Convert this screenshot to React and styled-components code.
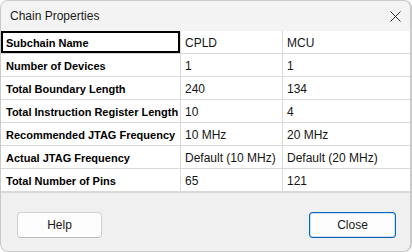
import React from 'react';
import styled, { createGlobalStyle } from 'styled-components';

const GlobalStyle = createGlobalStyle`
  html, body {
    margin: 0;
    padding: 0;
    background: #ffffff;
  }
`;

const Window = styled.div`
  box-sizing: border-box;
  width: 412px;
  height: 252px;
  border: 1px solid #c9c9c9;
  border-right-width: 2px;
  border-radius: 8px;
  background-color: #f0f0f0;
  overflow: hidden;
  display: flex;
  flex-direction: column;
  font-family: 'Liberation Sans', Arial, sans-serif;
  color: #1a1a1a;
`;

const TitleBar = styled.div`
  height: 30px;
  display: flex;
  align-items: center;
  justify-content: space-between;
  padding: 0 9px 0 9px;
  background-color: #f3f3f3;
  font-size: 12px;
`;

const CloseGlyph = styled.svg`
  width: 11px;
  height: 11px;
  margin-top: 1px;
`;

const Table = styled.div`
  display: grid;
  grid-template-columns: 180px 102px 1fr;
  background-color: #ffffff;
  border-bottom: 1px solid #d9d9d9;
`;

const Cell = styled.div`
  box-sizing: border-box;
  height: 23px;
  display: flex;
  align-items: center;
  padding-left: ${(p) => (p.$label ? '5px' : '4px')};
  padding-top: 1px;
  border-right: 1px solid #d9d9d9;
  border-bottom: 1px solid #d9d9d9;
  font-size: ${(p) => (p.$label ? '11px' : '12px')};
  font-weight: ${(p) => (p.$label ? 700 : 400)};
  color: ${(p) => (p.$label ? '#000000' : '#151515')};
  white-space: nowrap;
  box-shadow: ${(p) => (p.$focused ? 'inset 0 0 0 2px #000000' : 'none')};

  &:nth-child(3n) {
    border-right: none;
  }
`;

const Footer = styled.div`
  flex: 1;
  display: flex;
  justify-content: space-between;
  align-items: flex-start;
  padding: 19px 14px 0 16px;
`;

const Button = styled.button`
  box-sizing: border-box;
  width: ${(p) => (p.$primary ? '87px' : '85px')};
  height: 26px;
  border-radius: 4px;
  border: 1px solid ${(p) => (p.$primary ? '#0067c0' : '#d0d0d0')};
  border-bottom-color: ${(p) => (p.$primary ? '#0060b0' : '#bcbcbc')};
  box-shadow: ${(p) => (p.$primary ? 'inset 0 0 0 1px #cfe0f3' : 'none')};
  background-color: #fdfdfd;
  font-family: 'Liberation Sans', Arial, sans-serif;
  font-size: 12px;
  color: #1a1a1a;
  padding: 0;
`;

const rows = [
  ['Subchain Name', 'CPLD', 'MCU'],
  ['Number of Devices', '1', '1'],
  ['Total Boundary Length', '240', '134'],
  ['Total Instruction Register Length', '10', '4'],
  ['Recommended JTAG Frequency', '10 MHz', '20 MHz'],
  ['Actual JTAG Frequency', 'Default (10 MHz)', 'Default (20 MHz)'],
  ['Total Number of Pins', '65', '121'],
];

export default function App() {
  return (
    <>
      <GlobalStyle />
      <Window>
        <TitleBar>
          <span>Chain Properties</span>
          <CloseGlyph viewBox="0 0 11 11">
            <path d="M0.5 0.5 L10.5 10.5 M10.5 0.5 L0.5 10.5" stroke="#1a1a1a" strokeWidth="0.9" fill="none" />
          </CloseGlyph>
        </TitleBar>
        <Table>
          {rows.map((row, r) => row.map((text, c) => (
            <Cell key={`${r}-${c}`} $label={c === 0} $focused={r === 0 && c === 0}>
              {text}
            </Cell>
          )))}
        </Table>
        <Footer>
          <Button>Help</Button>
          <Button $primary>Close</Button>
        </Footer>
      </Window>
    </>
  );
}
